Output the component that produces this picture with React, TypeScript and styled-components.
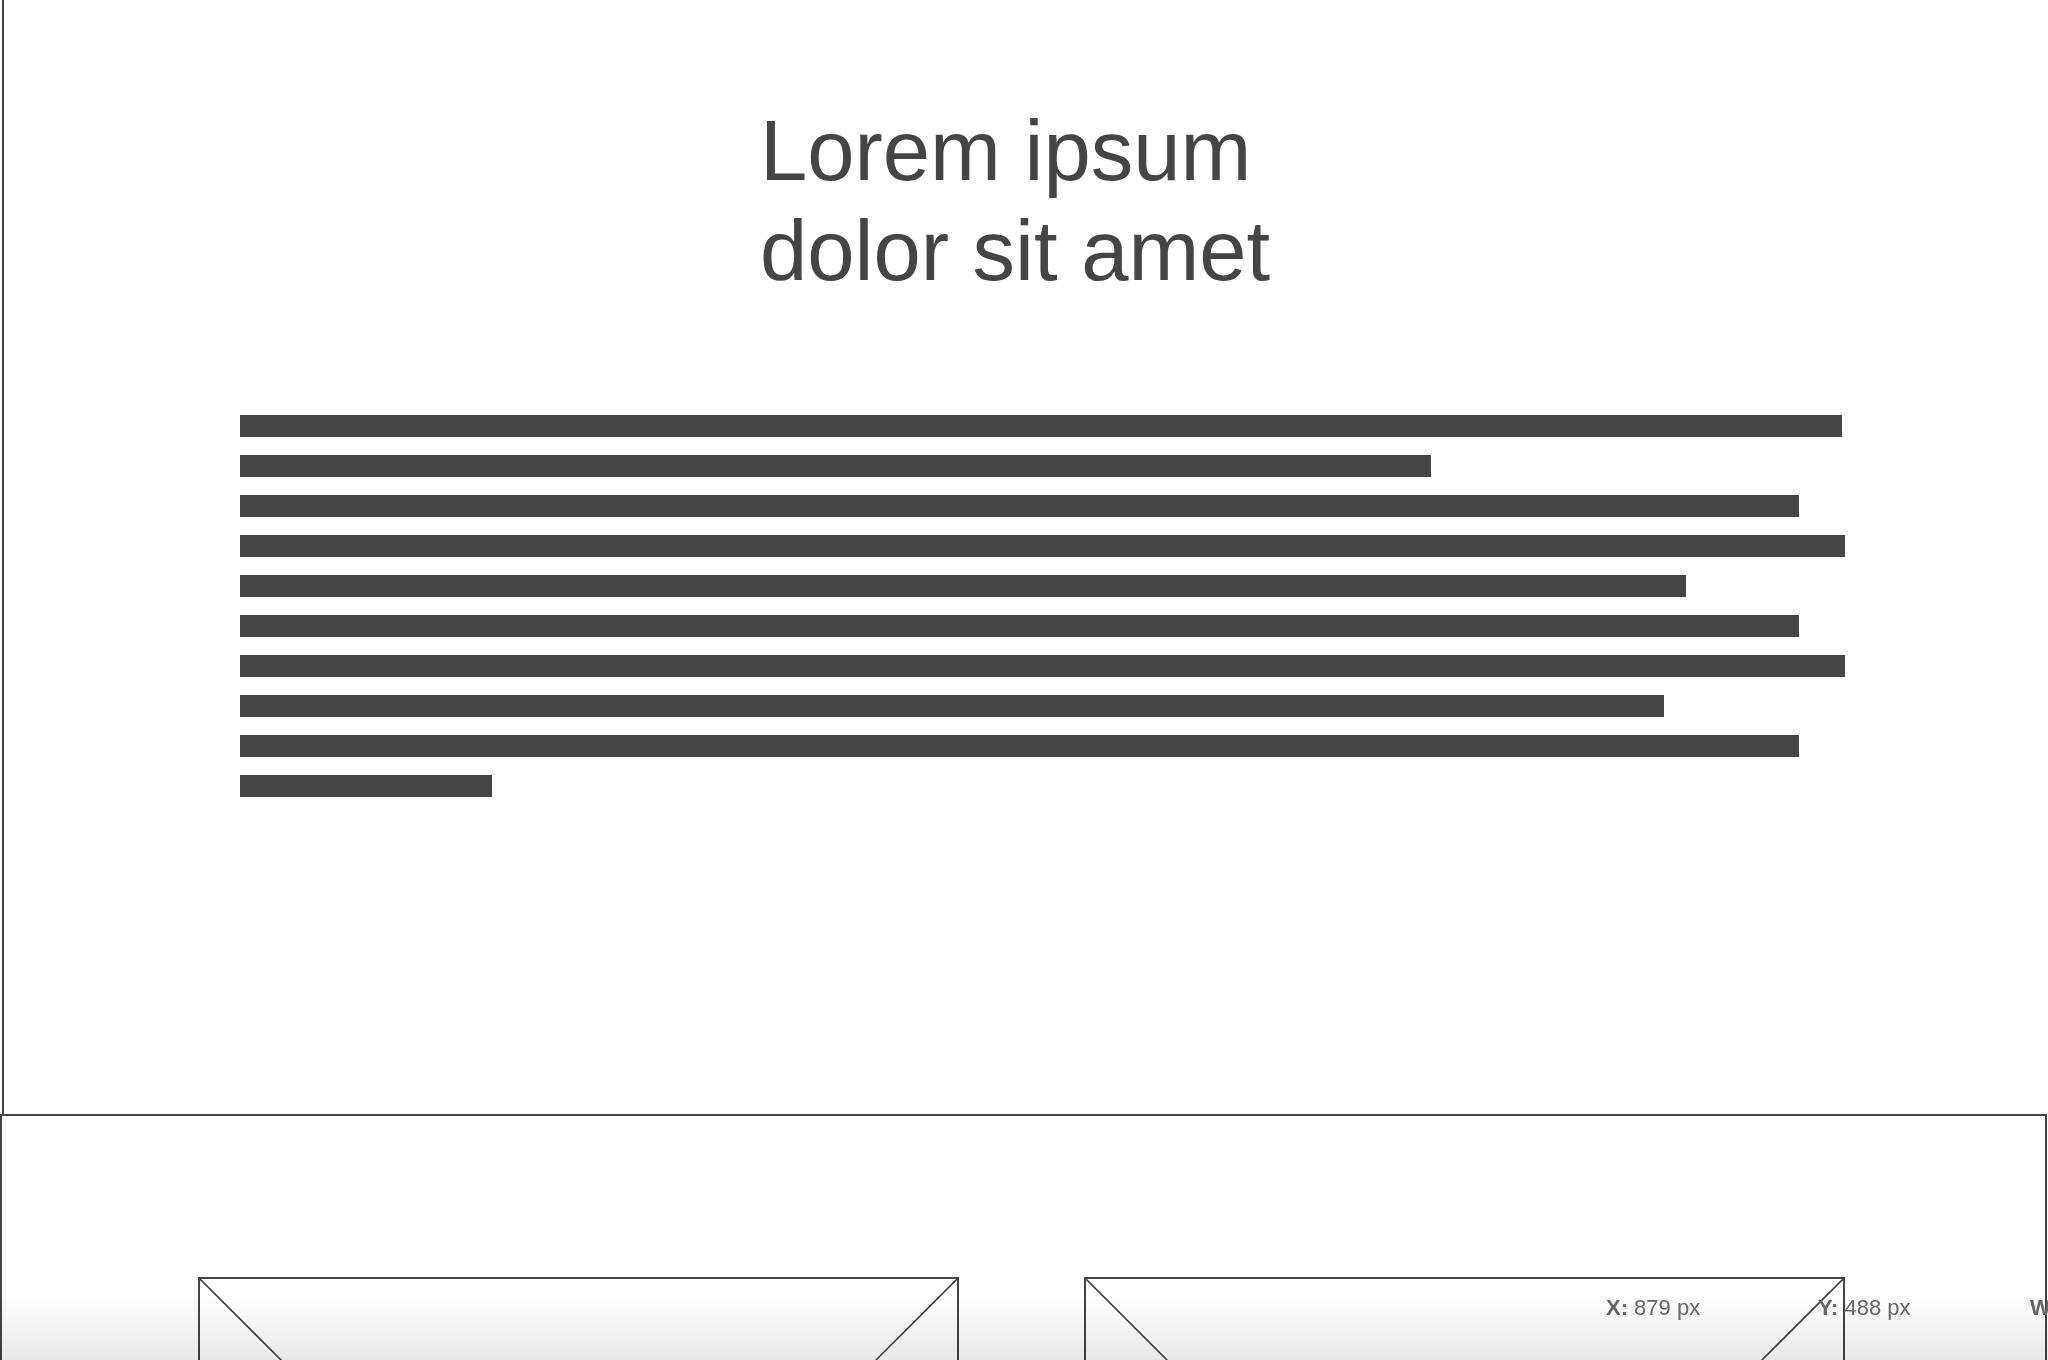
import React from 'react';
import styled, { createGlobalStyle } from 'styled-components';

const GlobalStyle = createGlobalStyle`
    html, body {
        margin: 0;
        padding: 0;
        background: #ffffff;
        overflow: hidden;
    }
    body {
        font-family: "Liberation Sans", Arial, sans-serif;
        color: #454545;
    }
`;

const Canvas = styled.div`
    position: relative;
    width: 2048px;
    height: 1360px;
    overflow: hidden;
    background: #ffffff;
`;

const TopPanel = styled.section`
    box-sizing: border-box;
    margin-left: 2px;
    width: 2060px;
    height: 1114px;
    border-left: 2px solid #444444;
    padding-top: 101px;
`;

const Title = styled.h1`
    margin: 0 0 0 756px;
    font-family: "Liberation Sans", Arial, sans-serif;
    font-weight: 400;
    font-size: 85px;
    line-height: 100px;
    color: #454545;
`;

const TextBlock = styled.div`
    display: flex;
    flex-direction: column;
    gap: 18px;
    margin: 114px 0 0 236px;
`;

const TextBar = styled.div<{ $width: number }>`
    width: ${(p) => p.$width}px;
    height: 22px;
    background: #454545;
`;

const BottomPanel = styled.section`
    box-sizing: border-box;
    width: 2047px;
    height: 1000px;
    border: 2px solid #444444;
    display: flex;
    gap: 125px;
    padding: 161px 0 0 196px;
`;

const ImageBox = styled.div`
    box-sizing: border-box;
    flex: none;
    width: 761px;
    height: 761px;
    border: 2px solid #444444;

    svg {
        display: block;
        width: 100%;
        height: 100%;
    }
`;

const StatusBar = styled.div`
    position: fixed;
    left: 0;
    right: 0;
    bottom: 0;
    height: 77px;
    display: flex;
    align-items: flex-start;
    padding-left: 1586px;
    background: linear-gradient(
        to bottom,
        rgba(0, 0, 0, 0) 0%,
        rgba(0, 0, 0, 0) 12%,
        rgba(0, 0, 0, 0.085) 100%
    );
    pointer-events: none;
`;

const StatusItem = styled.div`
    box-sizing: border-box;
    flex: none;
    width: 212px;
    height: 48px;
    padding: 3px 20px 0;
    line-height: 44px;
    font-family: "Liberation Sans", Arial, sans-serif;
    font-size: 22px;
    color: #666666;
    white-space: nowrap;

    b {
        font-weight: 700;
    }
`;

const barWidths = [1602, 1191, 1559, 1605, 1446, 1559, 1605, 1424, 1559, 252];

const Placeholder = () => (
    <ImageBox>
        <svg viewBox="0 0 100 100" preserveAspectRatio="none">
            <line x1="0" y1="0" x2="100" y2="100" stroke="#444" strokeWidth="1.6" vectorEffect="non-scaling-stroke" />
            <line x1="100" y1="0" x2="0" y2="100" stroke="#444" strokeWidth="1.6" vectorEffect="non-scaling-stroke" />
        </svg>
    </ImageBox>
);

export default function App() {
    return (
        <Canvas>
            <GlobalStyle />
            <TopPanel>
                <Title>
                    Lorem ipsum
                    <br />
                    dolor sit amet
                </Title>
                <TextBlock>
                    {barWidths.map((w, i) => (
                        <TextBar key={i} $width={w} />
                    ))}
                </TextBlock>
            </TopPanel>
            <BottomPanel>
                <Placeholder />
                <Placeholder />
            </BottomPanel>
            <StatusBar>
                <StatusItem>
                    <b>X:</b> 879 px
                </StatusItem>
                <StatusItem>
                    <b>Y:</b> 488 px
                </StatusItem>
                <StatusItem>
                    <b>W:</b> 761 px
                </StatusItem>
            </StatusBar>
        </Canvas>
    );
}
